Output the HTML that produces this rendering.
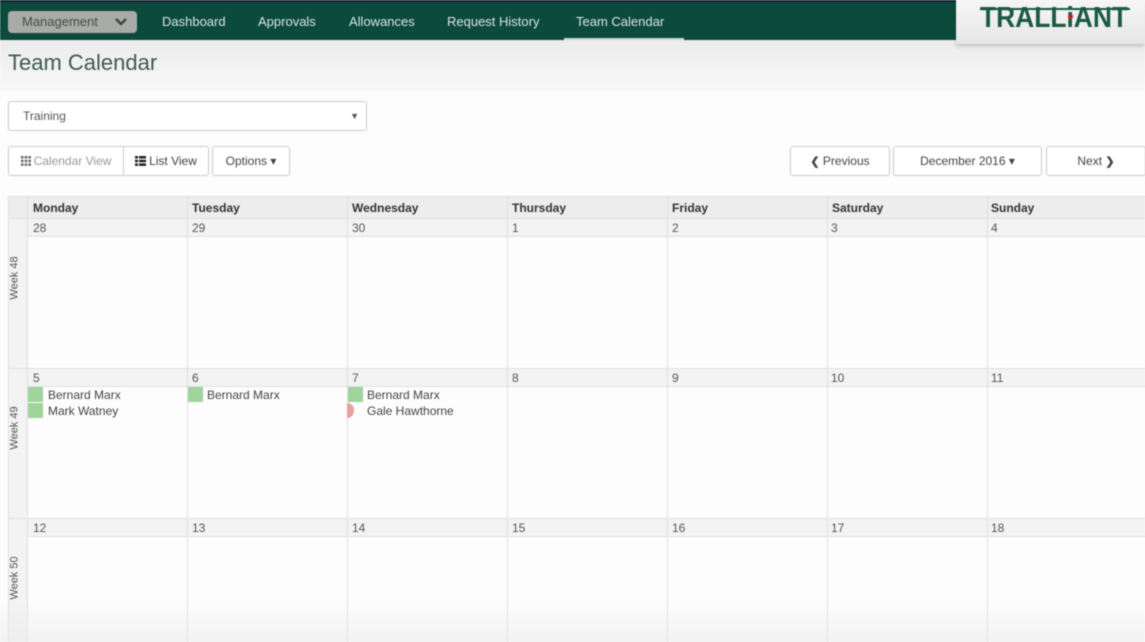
<!DOCTYPE html>
<html><head><meta charset="utf-8"><style>
*{box-sizing:border-box;margin:0;padding:0}
body{width:1145px;height:642px;overflow:hidden;background:#fdfdfd;font-family:"Liberation Sans",sans-serif;color:#555;position:relative;filter:blur(0.4px)}
.nav{position:absolute;left:0;top:0;width:1145px;height:40px;background:#0c4a3c;border-top:2px solid #123}
.mgmt{position:absolute;left:8px;top:9px;width:129px;height:22px;background:#a9aba9;border-radius:4px;color:#4a4a4a;font-size:13px;line-height:22px;padding-left:14px}
.mgmt svg{position:absolute;right:10px;top:7px}
.nl{position:absolute;top:12px;color:#d8e6e0;font-size:13px}
.act{position:absolute;left:564px;top:36px;width:120px;height:4px;background:#cfd6d3}
.logo{position:absolute;left:956px;top:0;width:189px;height:44px;background:linear-gradient(#f6f6f6,#e6e6e6);box-shadow:0 2px 4px rgba(0,0,0,.2)}
.logo span{position:absolute;left:24px;top:4px;font-size:29px;line-height:1;font-weight:bold;color:#1b5a44;transform:scaleX(0.91);transform-origin:left;white-space:nowrap}
.logo .bar{position:absolute;left:24px;top:8px;width:150px;height:2px;background:#1b5a44}
.hdr{position:absolute;left:0;top:40px;width:1145px;height:51px;background:linear-gradient(#ececec,#f8f8f8)}
h1{position:absolute;left:8px;top:50px;font-size:22px;font-weight:normal;color:#3d5a57}
.sel{position:absolute;left:8px;top:101px;width:359px;height:30px;border:1px solid #ccc;border-radius:3px;background:#fff;font-size:12px;line-height:28px;padding-left:14px;color:#555}
.sel i{position:absolute;right:7px;top:0;font-style:normal;font-size:9px}
.btn{position:absolute;top:146px;height:30px;border:1px solid #ccc;background:#fff;font-size:12px;line-height:28px;text-align:center;color:#444;border-radius:3px}
.dh{position:absolute;top:196px;height:22px;background:#ededed;border-top:1px solid #ddd}
.dn{position:absolute;font-size:12px;font-weight:bold;color:#333;top:201px}
.vl{position:absolute;width:1px;background:#e0e0e0}
.hl{position:absolute;height:1px;background:#e0e0e0;left:8px;width:1137px}
.strip{position:absolute;height:18px;background:#f3f3f3}
.num{position:absolute;font-size:12px;color:#555}
.wk{position:absolute;left:8px;width:19px;background:#f3f3f3}
.wkt{position:absolute;font-size:11px;color:#555;transform:rotate(-90deg);transform-origin:center;white-space:nowrap}
.ev{position:absolute;font-size:12px;color:#444}
.sq{position:absolute;width:15px;height:15px;background:#9fd49a}
</style></head><body>
<div class="nav">
<div class="mgmt">Management<svg width="12" height="8" viewBox="0 0 12 8"><path d="M1 1l5 5 5-5" stroke="#444" stroke-width="2.5" fill="none"/></svg></div>
<div class="nl" style="left:162px">Dashboard</div>
<div class="nl" style="left:258px">Approvals</div>
<div class="nl" style="left:349px">Allowances</div>
<div class="nl" style="left:447px">Request History</div>
<div class="nl" style="left:576px">Team Calendar</div>
<div class="act"></div>
</div>
<div class="hdr"></div>
<div class="logo"><div class="bar"></div><span>TRALLiANT</span><div style="position:absolute;left:112px;top:14px;width:5px;height:5px;border-radius:50%;background:#b22"></div></div>
<h1>Team Calendar</h1>
<div class="sel">Training<i>▼</i></div>
<div class="btn" style="left:8px;width:116px;color:#999;border-radius:3px 0 0 3px"><svg width="10" height="10" style="vertical-align:-1px;margin-right:3px"><g fill="#666"><rect x="0" y="0" width="2.5" height="2.5"/><rect x="3.7" y="0" width="2.5" height="2.5"/><rect x="7.4" y="0" width="2.5" height="2.5"/><rect x="0" y="3.7" width="2.5" height="2.5"/><rect x="3.7" y="3.7" width="2.5" height="2.5"/><rect x="7.4" y="3.7" width="2.5" height="2.5"/><rect x="0" y="7.4" width="2.5" height="2.5"/><rect x="3.7" y="7.4" width="2.5" height="2.5"/><rect x="7.4" y="7.4" width="2.5" height="2.5"/></g></svg>Calendar View</div>
<div class="btn" style="left:123px;width:86px;border-radius:0 3px 3px 0"><svg width="11" height="10" style="vertical-align:-1px;margin-right:3px"><g fill="#222"><rect x="0" y="0" width="3" height="2.5"/><rect x="4" y="0" width="7" height="2.5"/><rect x="0" y="3.7" width="3" height="2.5"/><rect x="4" y="3.7" width="7" height="2.5"/><rect x="0" y="7.4" width="3" height="2.5"/><rect x="4" y="7.4" width="7" height="2.5"/></g></svg>List View</div>
<div class="btn" style="left:212px;width:78px">Options ▾</div>
<div class="btn" style="left:790px;width:100px"><b style="font-size:11px">❮</b> Previous</div>
<div class="btn" style="left:893px;width:149px">December 2016 ▾</div>
<div class="btn" style="left:1046px;width:100px">Next <b style="font-size:11px">❯</b></div>

<div class="dh" style="left:8px;width:1137px"></div>
<div class="dn" style="left:33px">Monday</div>
<div class="dn" style="left:192px">Tuesday</div>
<div class="dn" style="left:352px">Wednesday</div>
<div class="dn" style="left:512px">Thursday</div>
<div class="dn" style="left:672px">Friday</div>
<div class="dn" style="left:832px">Saturday</div>
<div class="dn" style="left:991px">Sunday</div>

<div class="wk" style="top:218px;height:424px"></div>
<div class="strip" style="left:27px;width:1118px;top:219px"></div>
<div class="strip" style="left:27px;width:1118px;top:369px"></div>
<div class="strip" style="left:27px;width:1118px;top:519px"></div>
<div class="hl" style="top:218px"></div>
<div class="hl" style="top:236px;left:27px"></div>
<div class="hl" style="top:368px"></div>
<div class="hl" style="top:386px;left:27px"></div>
<div class="hl" style="top:518px"></div>
<div class="hl" style="top:536px;left:27px"></div>
<div class="vl" style="left:8px;top:196px;height:446px"></div>
<div class="vl" style="left:27px;top:196px;height:446px"></div>
<div class="vl" style="left:187px;top:196px;height:446px"></div>
<div class="vl" style="left:347px;top:196px;height:446px"></div>
<div class="vl" style="left:507px;top:196px;height:446px"></div>
<div class="vl" style="left:667px;top:196px;height:446px"></div>
<div class="vl" style="left:827px;top:196px;height:446px"></div>
<div class="vl" style="left:987px;top:196px;height:446px"></div>

<div class="wkt" style="left:-7px;top:272px">Week 48</div>
<div class="wkt" style="left:-7px;top:422px">Week 49</div>
<div class="wkt" style="left:-7px;top:572px">Week 50</div>

<div class="num" style="left:33px;top:221px">28</div><div class="num" style="left:192px;top:221px">29</div><div class="num" style="left:352px;top:221px">30</div><div class="num" style="left:512px;top:221px">1</div><div class="num" style="left:672px;top:221px">2</div><div class="num" style="left:831px;top:221px">3</div><div class="num" style="left:991px;top:221px">4</div>
<div class="num" style="left:33px;top:371px">5</div><div class="num" style="left:192px;top:371px">6</div><div class="num" style="left:352px;top:371px">7</div><div class="num" style="left:512px;top:371px">8</div><div class="num" style="left:672px;top:371px">9</div><div class="num" style="left:831px;top:371px">10</div><div class="num" style="left:991px;top:371px">11</div>
<div class="num" style="left:33px;top:521px">12</div><div class="num" style="left:192px;top:521px">13</div><div class="num" style="left:352px;top:521px">14</div><div class="num" style="left:512px;top:521px">15</div><div class="num" style="left:672px;top:521px">16</div><div class="num" style="left:831px;top:521px">17</div><div class="num" style="left:991px;top:521px">18</div>

<div class="sq" style="left:28px;top:387px"></div><div class="ev" style="left:48px;top:388px">Bernard Marx</div>
<div class="sq" style="left:28px;top:403px"></div><div class="ev" style="left:48px;top:404px">Mark Watney</div>
<div class="sq" style="left:188px;top:387px"></div><div class="ev" style="left:207px;top:388px">Bernard Marx</div>
<div class="sq" style="left:348px;top:387px"></div><div class="ev" style="left:367px;top:388px">Bernard Marx</div>
<div style="position:absolute;left:347px;top:403px;width:7px;height:15px;background:#e8a0a0;border-radius:0 8px 8px 0"></div><div class="ev" style="left:367px;top:404px">Gale Hawthorne</div>
<div style="position:absolute;left:0;top:600px;width:1145px;height:42px;background:linear-gradient(rgba(240,240,240,0),rgba(235,235,235,.6))"></div>
</body></html>
